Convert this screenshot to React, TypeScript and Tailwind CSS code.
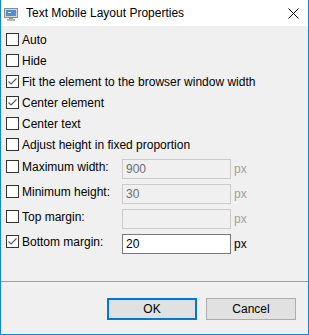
import React from "react";

const font = { fontFamily: '"Liberation Sans", Arial, sans-serif' };

function Box({ checked }: { checked?: boolean }) {
  return (
    <div className="w-[13px] h-[13px] border border-[#333333] bg-white flex items-center justify-center shrink-0">
      {checked && (
        <svg width="11" height="11" viewBox="0 0 11 11">
          <path d="M1.5 5.5 L4 8 L9.5 2.5" fill="none" stroke="#5a5a5a" strokeWidth="1.2" />
        </svg>
      )}
    </div>
  );
}

function CheckRow({ label, checked }: { label: string; checked?: boolean }) {
  return (
    <div className="h-[21px] flex items-center pl-[5px]">
      <Box checked={checked} />
      <span className="ml-[3px] text-[12px] text-black leading-none whitespace-nowrap">{label}</span>
    </div>
  );
}

function InputRow({ label, value, checked }: { label: string; value: string; checked?: boolean }) {
  const enabled = !!checked;
  return (
    <div className="h-[25px] flex items-start pl-[5px]">
      <div className="mt-[3px] flex items-center h-[13px]">
        <Box checked={checked} />
        <span className="ml-[3px] text-[12px] text-black leading-none w-[100px] whitespace-nowrap">{label}</span>
      </div>
      <div
        className={
          "mt-[2px] w-[109px] h-[20px] border flex items-center pl-[3px] text-[12px] " +
          (enabled ? "bg-white border-[#7a7a7a] text-black" : "bg-[#f0f0f0] border-[#cccccc] text-[#6d6d6d]")
        }
      >
        {value}
      </div>
      <span className={"ml-[3px] mt-[6px] text-[12px] leading-none " + (enabled ? "text-black" : "text-[#a0a0a0]")}>px</span>
    </div>
  );
}

export default function App() {
  return (
    <div style={font} className="w-[309px] h-[335px] bg-[#f0f0f0] border-l border-r border-b border-[#1883d7] flex flex-col">
      <div className="h-[26px] bg-white flex items-center shrink-0">
        <svg width="14" height="13" viewBox="0 0 14 13" className="ml-[3px] mt-[2px]">
          <rect x="0.5" y="0.5" width="13" height="9" fill="#d6d6d6" stroke="#8c8c8c" />
          <rect x="2" y="2" width="10" height="6" fill="#4a90d9" />
          <rect x="4" y="4" width="3" height="1" fill="#ffffff" />
          <rect x="5" y="10" width="4" height="1" fill="#9a9a9a" />
          <rect x="3" y="11" width="8" height="2" fill="#b5b5b5" />
        </svg>
        <span className="ml-[8px] text-[12px] text-black">Text Mobile Layout Properties</span>
        <div className="flex-1" />
        <svg width="11" height="11" viewBox="0 0 11 11" className="mr-[9px]">
          <path d="M0.5 0.5 L10.5 10.5 M10.5 0.5 L0.5 10.5" stroke="#000" strokeWidth="1" />
        </svg>
      </div>
      <div className="pt-[3px] flex flex-col">
        <CheckRow label="Auto" />
        <CheckRow label="Hide" />
        <CheckRow label="Fit the element to the browser window width" checked />
        <CheckRow label="Center element" checked />
        <CheckRow label="Center text" />
        <CheckRow label="Adjust height in fixed proportion" />
      </div>
      <div className="pt-[2px] flex flex-col">
        <InputRow label="Maximum width:" value="900" />
        <InputRow label="Minimum height:" value="30" />
        <InputRow label="Top margin:" value="" />
        <InputRow label="Bottom margin:" value="20" checked />
      </div>
      <div className="mt-[24px] h-px bg-[#a0a0a0]" />
      <div className="flex justify-end gap-[9px] pr-[12px] pt-[16px]">
        <button className="w-[90px] h-[22px] bg-[#e1e1e1] border-2 border-[#0078d7] text-[12px] text-black">OK</button>
        <button className="w-[90px] h-[22px] bg-[#e1e1e1] border border-[#adadad] text-[12px] text-black">Cancel</button>
      </div>
    </div>
  );
}
